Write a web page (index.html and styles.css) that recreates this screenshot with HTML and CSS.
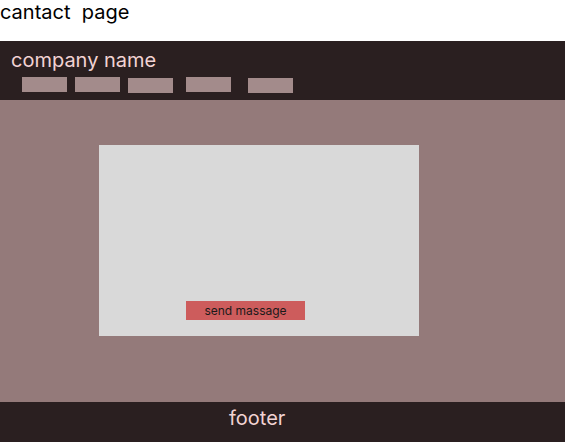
FILE: index.html
```html
<!DOCTYPE html>
<html>
<head>
<meta charset="utf-8">
<link rel="stylesheet" href="styles.css">
</head>
<body>
<div class="page-title">cantact&nbsp;&nbsp;page</div>
<header class="site-header">
  <div class="brand">company name</div>
  <nav class="nav">
    <span class="nav-item"></span>
    <span class="nav-item"></span>
    <span class="nav-item low"></span>
    <span class="nav-item wide-gap"></span>
    <span class="nav-item low wider-gap"></span>
  </nav>
</header>
<main class="main">
  <div class="card">
    <button class="send">send massage</button>
  </div>
</main>
<footer class="site-footer">footer</footer>
</body>
</html>
```
FILE: styles.css
```css
html, body {
  margin: 0;
  padding: 0;
  background: #ffffff;
  font-family: Inter, "Noto Sans", sans-serif;
}
body {
  width: 565px;
  height: 442px;
  display: flex;
  flex-direction: column;
  overflow: hidden;
}
.page-title {
  height: 41px;
  font-size: 20px;
  line-height: 24px;
  color: #000;
  padding-left: 0;
}
.site-header {
  height: 59px;
  background: #2a1f20;
  box-sizing: border-box;
  padding: 6px 0 0 11px;
}
.brand {
  color: #f2d3d3;
  font-size: 20px;
  line-height: 26px;
}
.nav {
  display: flex;
  align-items: flex-start;
  padding-left: 11px;
  margin-top: 4px;
  gap: 8px;
}
.nav-item {
  display: block;
  width: 45px;
  height: 15px;
  background: #a38b8b;
}
.nav-item.low { margin-top: 1px; }
.nav-item.wide-gap { margin-left: 5px; }
.nav-item.wider-gap { margin-left: 9px; }
.main {
  height: 302px;
  background: #947a7a;
  box-sizing: border-box;
  padding: 45px 0 0 99px;
}
.card {
  width: 320px;
  height: 191px;
  background: #d9d9d9;
  box-sizing: border-box;
  padding: 156px 0 0 87px;
}
.send {
  display: block;
  width: 119px;
  height: 19px;
  margin: 0;
  padding: 0;
  border: none;
  background: #cd5c5c;
  color: #1a1a1a;
  font-family: Inter, "Noto Sans", sans-serif;
  font-size: 12px;
  line-height: 19px;
  text-align: center;
}
.site-footer {
  height: 40px;
  background: #2a1f20;
  color: #f2d3d3;
  font-size: 20px;
  line-height: 32px;
  padding-left: 229px;
}
```
